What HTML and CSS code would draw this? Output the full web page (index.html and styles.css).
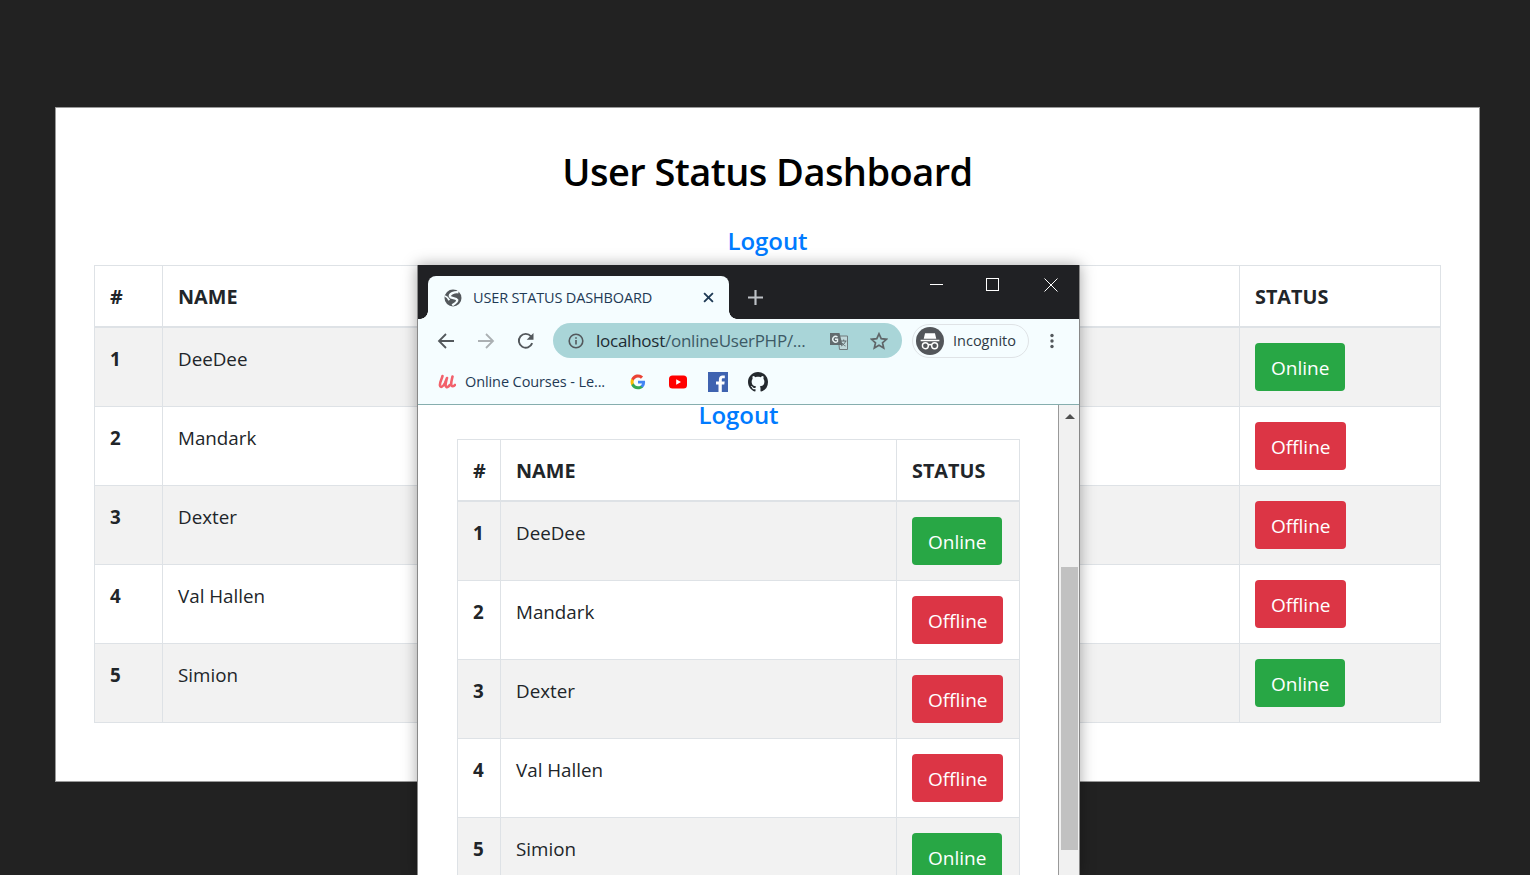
FILE: index.html
```html
<!DOCTYPE html>
<html lang="en">
<head>
<meta charset="utf-8">
<title>User Status Dashboard</title>
<link rel="stylesheet" href="styles.css">
</head>
<body>
<main class="card">
  <h1 class="title">User Status Dashboard</h1>
  <div class="logout-row"><a class="logout" href="#">Logout</a></div>
  <table class="users users-wide">
    <thead><tr><th class="c-num">#</th><th>NAME</th><th class="c-status">STATUS</th></tr></thead>
    <tbody>
      <tr><th class="c-num">1</th><td>DeeDee</td><td><span class="btn on">Online</span></td></tr>
      <tr><th class="c-num">2</th><td>Mandark</td><td><span class="btn off">Offline</span></td></tr>
      <tr><th class="c-num">3</th><td>Dexter</td><td><span class="btn off">Offline</span></td></tr>
      <tr><th class="c-num">4</th><td>Val Hallen</td><td><span class="btn off">Offline</span></td></tr>
      <tr><th class="c-num">5</th><td>Simion</td><td><span class="btn on">Online</span></td></tr>
    </tbody>
  </table>
</main>

<section class="window">
  <div class="tabstrip">
    <div class="tab">
      <svg class="tab-globe" viewBox="0 0 18 18"><circle cx="9" cy="9" r="8.500" fill="#53585c"/><path d="M14.500 3.200C10.500 2.600 5 4.800 6 7.500 7 10 12 8.200 13.200 11c.6 1.800-2.700 3.800-5 5.200" fill="none" stroke="#f5fdff" stroke-width="2.400"/><path d="M1 7c2 .6 3.200 2.200 4.300 4.200" fill="none" stroke="#f5fdff" stroke-width="1.800"/></svg>
      <span class="tab-title">USER STATUS DASHBOARD</span>
      <svg class="tab-close" viewBox="0 0 10 10"><path d="M1 1l8 8M9 1 1 9" stroke="#1f3a55" stroke-width="1.700"/></svg>
    </div>
    <svg class="new-tab" viewBox="0 0 14 14"><path d="M7 0v14M0 7h14" stroke="#bdc1c6" stroke-width="2"/></svg>
    <div class="win-controls">
      <svg class="wc wc-min" viewBox="0 0 14 14"><path d="M0 6.500h13" stroke="#fff" stroke-width="1"/></svg>
      <svg class="wc wc-max" viewBox="0 0 14 14"><rect x=".5" y=".5" width="12" height="12" fill="none" stroke="#fff"/></svg>
      <svg class="wc wc-close" viewBox="0 0 14 14"><path d="M.5.5l13 13M13.500.5l-13 13" stroke="#fff" stroke-width="1"/></svg>
    </div>
  </div>
  <div class="toolbar">
    <svg class="nav" viewBox="0 0 18 18"><path d="M17 9H2.500M9 2 2 9l7 7" fill="none" stroke="#53585c" stroke-width="1.800"/></svg>
    <svg class="nav" viewBox="0 0 18 18"><path d="M1 9h14.500M9 2l7 7-7 7" fill="none" stroke="#abb0b3" stroke-width="1.800"/></svg>
    <svg class="nav" viewBox="0 0 18 18"><path d="M15.200 11.200A6.900 6.900 0 1 1 14 4.300" fill="none" stroke="#53585c" stroke-width="1.900"/><path d="M16.500 1v6.800h-6.800z" fill="#53585c"/></svg>
    <div class="omnibox">
      <svg class="omni-info" viewBox="0 0 16 16"><circle cx="8" cy="8" r="6.800" fill="none" stroke="#53585c" stroke-width="1.600"/><path d="M8 7v4.600M8 4.200v1.600" stroke="#53585c" stroke-width="1.600"/></svg>
      <span class="url"><span class="url-host">localhost</span>/onlineUserPHP/...</span>
      <svg class="omni-tr" viewBox="0 0 18 18"><path d="M8 4h9.500v13.500H9.500z" fill="#c0d8da" stroke="#6f7a7d"/><path d="M0 1h9.500l3 12H0z" fill="#626b6e"/><path d="M7.500 5A2.900 2.900 0 1 0 7.500 9.500V7.200H5" fill="none" stroke="#e8f2f3" stroke-width="1.400"/><path d="M11 9h5.500M13.700 7.500V9M15.500 9c-.5 2.500-2.500 4-4.500 5M12 11c1 1.500 2 2.500 3.500 3" fill="none" stroke="#626b6e"/></svg>
      <svg class="omni-star" viewBox="0 0 18 18"><path d="m9 1.800 2.200 4.900 5.300.6-4 3.500 1.200 5.200L9 13.300 4.300 16l1.200-5.200-4-3.500 5.300-.6z" fill="none" stroke="#5f6669" stroke-width="1.700"/></svg>
    </div>
    <div class="incognito">
      <span class="inc-badge"><svg viewBox="0 0 20 20"><path d="M5.500 3h9l1.200 5H4.300zM1.500 8.800h17v1.400h-17z" fill="#fff"/><circle cx="5.800" cy="14.300" r="2.700" fill="none" stroke="#fff" stroke-width="1.300"/><circle cx="14.200" cy="14.300" r="2.700" fill="none" stroke="#fff" stroke-width="1.300"/><path d="M8.300 13.800c1-.7 2.400-.7 3.400 0" fill="none" stroke="#fff" stroke-width="1.200"/></svg></span>
      <span class="inc-label">Incognito</span>
    </div>
    <svg class="kebab" viewBox="0 0 4 16"><circle cx="2" cy="2.500" r="1.700" fill="#53585c"/><circle cx="2" cy="8" r="1.700" fill="#53585c"/><circle cx="2" cy="13.500" r="1.700" fill="#53585c"/></svg>
  </div>
  <div class="bookmarks">
    <svg class="bm-udemy" viewBox="0 0 18 16"><path d="M4.500 2C4 5 1.500 8 2 11.500c.5 2.500 3 1.500 5-2.500L9 4M8.800 4.500C8 8 7.200 10 7.700 12c.6 2 3 1 4-1M14.500 2.500c-.6 3-1.700 6-1.200 8.500.4 2 2.500 1.500 3.700 0" fill="none" stroke="#f2616b" stroke-width="2.600" stroke-linecap="round" stroke-linejoin="round"/></svg>
    <span class="bm-label">Online Courses - Le...</span>
    <svg class="bm-icon bm-g" viewBox="0 0 18 18"><path d="M17 9.200c0-.6-.1-1.200-.2-1.700H9v3.300h4.500a3.800 3.800 0 0 1-1.700 2.500v2.100h2.700A8 8 0 0 0 17 9.200z" fill="#4285f4"/><path d="M9 17.200c2.300 0 4.200-.8 5.500-2l-2.700-2.100c-.7.500-1.700.8-2.800.8-2.200 0-4-1.500-4.700-3.400H1.500v2.100a8.200 8.200 0 0 0 7.500 4.600z" fill="#34a853"/><path d="M4.300 10.500a5 5 0 0 1 0-3.100V5.300H1.500a8.200 8.200 0 0 0 0 7.300z" fill="#fbbc05"/><path d="M9 4c1.300 0 2.400.4 3.300 1.300l2.400-2.400A8.200 8.200 0 0 0 1.500 5.300l2.800 2.100C5 5.500 6.800 4 9 4z" fill="#ea4335"/></svg>
    <svg class="bm-icon bm-yt" viewBox="0 0 18 18"><rect x="0" y="2.500" width="18" height="13" rx="3.500" fill="#f00"/><path d="M7.200 6.300v5.400L12 9z" fill="#fff"/></svg>
    <svg class="bm-icon bm-fb" viewBox="0 0 20 20"><rect width="20" height="20" fill="#3f63b0"/><path d="M13.800 20v-7.600h2.500l.4-3h-2.900V7.600c0-.9.300-1.400 1.500-1.400h1.500V3.500c-.4 0-1.200-.1-2.200-.1-2.200 0-3.700 1.300-3.700 3.800v2.200H8v3h2.500V20z" fill="#fff"/></svg>
    <svg class="bm-icon bm-gh" viewBox="0 0 16 16"><path fill="#24292e" d="M8 0C3.580 0 0 3.580 0 8c0 3.540 2.290 6.530 5.470 7.590.4.070.55-.17.550-.38 0-.19-.01-.82-.01-1.490-2.010.37-2.530-.49-2.690-.94-.09-.23-.48-.94-.82-1.130-.28-.15-.68-.52-.01-.53.630-.01 1.080.58 1.230.82.720 1.210 1.870.87 2.330.66.070-.52.280-.87.510-1.070-1.780-.2-3.640-.89-3.640-3.950 0-.87.310-1.590.82-2.150-.08-.2-.36-1.020.08-2.120 0 0 .67-.21 2.200.82.640-.18 1.320-.27 2-.27.680 0 1.360.09 2 .27 1.530-1.040 2.200-.82 2.200-.82.440 1.100.160 1.920.080 2.120.51.560.82 1.270.82 2.150 0 3.070-1.870 3.750-3.650 3.950.29.250.54.730.54 1.480 0 1.070-.01 1.930-.01 2.200 0 .21.150.46.55.38A8.013 8.013 0 0 0 16 8c0-4.420-3.580-8-8-8z"/></svg>
  </div>
  <div class="viewport">
    <div class="page">
      <div class="logout-row"><a class="logout" href="#">Logout</a></div>
      <table class="users users-narrow">
        <thead><tr><th class="c-num">#</th><th>NAME</th><th class="c-status">STATUS</th></tr></thead>
        <tbody>
          <tr><th class="c-num">1</th><td>DeeDee</td><td><span class="btn on">Online</span></td></tr>
          <tr><th class="c-num">2</th><td>Mandark</td><td><span class="btn off">Offline</span></td></tr>
          <tr><th class="c-num">3</th><td>Dexter</td><td><span class="btn off">Offline</span></td></tr>
          <tr><th class="c-num">4</th><td>Val Hallen</td><td><span class="btn off">Offline</span></td></tr>
          <tr><th class="c-num">5</th><td>Simion</td><td><span class="btn on">Online</span></td></tr>
        </tbody>
      </table>
    </div>
    <div class="scrollbar">
      <div class="sb-up"></div>
      <div class="sb-thumb"></div>
    </div>
  </div>
</section>
</body>
</html>
```
FILE: styles.css
```css
* { box-sizing: border-box; }
html, body { height: 100%; overflow: hidden; }
body {
  margin: 0;
  padding: 107px 50px 0 55px;
  background: #222;
  font-family: "Open Sans", "Noto Sans", "Liberation Sans", sans-serif;
  color: #212529;
}
.card {
  height: 675px;
  background: #fff;
  border: 1px solid #999;
  padding: 38px 38px 0;
}
.title {
  margin: 0 0 31px;
  text-align: center;
  font-size: 38px;
  line-height: 50px;
  font-weight: 600;
  color: #000;
  letter-spacing: -0.55px;
}
.logout-row {
  text-align: center;
  height: 28px;
  line-height: 28px;
  margin-bottom: 10px;
}
.logout {
  color: #007bff;
  text-decoration: none;
  font-size: 24px;
  font-weight: 600;
  letter-spacing: -0.05px;
}
.users {
  border-collapse: collapse;
  table-layout: fixed;
  width: 100%;
  font-size: 18.8px;
}
.users-wide { width: 1347px; }
.users-narrow { width: 563px; }
.users th, .users td {
  border: 1px solid #dee2e6;
  padding: 15px;
  text-align: left;
  vertical-align: top;
  line-height: 32px;
}
.users thead th {
  border-bottom-width: 2px;
  font-size: 19.8px;
  font-weight: 700;
  height: 61px;
  padding: 16px 15px 13px;
  line-height: 30px;
}
.users tbody tr { height: 79px; }
.users tbody tr:nth-child(odd) { background: #f2f2f2; }
.users tbody .c-num { font-weight: 700; }
.users-wide .c-num { width: 68px; }
.users-wide .c-status { width: 201px; }
.users-narrow .c-num { width: 43px; }
.users-narrow .c-status { width: 123px; }
.btn {
  display: inline-block;
  height: 48px;
  line-height: 50px;
  padding: 0 16px;
  border-radius: 4px;
  color: #fff;
  font-size: 19px;
  vertical-align: top;
}
.on { background: #28a745; }
.off { background: #dc3545; }

.window {
  position: absolute;
  left: 417px;
  top: 265px;
  width: 663px;
  height: 610px;
  display: flex;
  flex-direction: column;
  background: #fff;
  border-left: 1px solid #888;
  border-right: 1px solid #888;
  box-shadow: 0 0 14px rgba(0,0,0,.35);
  overflow: hidden;
}
.tabstrip {
  flex: none;
  height: 54px;
  background: #202124;
  display: flex;
  align-items: flex-end;
  padding-left: 10px;
  position: relative;
}
.tab {
  width: 301px;
  height: 43px;
  background: #f5fdff;
  border-radius: 8px 8px 0 0;
  display: flex;
  align-items: center;
  padding: 0 15px 0 16px;
  position: relative;
}
.tab::before, .tab::after {
  content: "";
  position: absolute;
  bottom: 0;
  width: 8px;
  height: 8px;
  background: radial-gradient(circle at 100% 0, #202124 7.5px, #f5fdff 8px);
}
.tab::before { left: -8px; transform: scaleX(-1); }
.tab::after { right: -8px; }
.tab-globe { width: 18px; height: 18px; flex: none; margin-right: 11px; }
.tab-title { flex: 1; font-size: 14.5px; color: #1f3a55; white-space: nowrap; letter-spacing: -0.15px; }
.tab-close { width: 11px; height: 11px; flex: none; }
.new-tab { width: 15px; height: 15px; margin: 0 0 14px 19px; flex: none; }
.win-controls {
  position: absolute;
  right: 0;
  top: 0;
  width: 149px;
  height: 40px;
}
.wc { width: 14px; height: 14px; position: absolute; top: 13px; }
.wc-min { left: 0; }
.wc-max { left: 56px; }
.wc-close { left: 114px; }
.toolbar {
  flex: none;
  height: 44px;
  background: #f5fdff;
  display: flex;
  align-items: center;
  padding: 0 0 1px 19px;
}
.nav { width: 18px; height: 18px; flex: none; margin-right: 22px; }
.nav:nth-of-type(3) { margin-right: 18px; }
.omnibox {
  width: 349px;
  height: 35px;
  border-radius: 18px;
  background: #a9d5d8;
  display: flex;
  align-items: center;
  padding: 0 14px 0 15px;
  flex: none;
}
.omni-info { width: 16px; height: 16px; flex: none; margin-right: 12px; }
.url { flex: 1; min-width: 0; font-size: 17px; color: #3d5a66; white-space: nowrap; letter-spacing: -0.25px; }
.url-host { color: #1d2b33; }
.omni-tr { width: 18px; height: 18px; flex: none; margin-right: 22px; }
.omni-star { width: 18px; height: 18px; flex: none; }
.incognito {
  margin-left: 10px;
  width: 117px;
  height: 34px;
  border: 1px solid #dfe3e6;
  border-radius: 17px;
  display: flex;
  align-items: center;
  padding-left: 3px;
  flex: none;
}
.inc-badge {
  width: 28px;
  height: 28px;
  border-radius: 50%;
  background: #53565a;
  display: flex;
  align-items: center;
  justify-content: center;
  flex: none;
}
.inc-badge svg { width: 22px; height: 22px; }
.inc-label { margin-left: 9px; font-size: 14.5px; color: #2f3a45; }
.kebab { width: 4px; height: 16px; margin-left: 21px; flex: none; }
.bookmarks {
  flex: none;
  height: 42px;
  background: #f5fdff;
  border-bottom: 1px solid #86aeae;
  display: flex;
  align-items: center;
  padding: 0 0 3px 20px;
}
.bm-udemy { width: 18px; height: 16px; flex: none; margin-right: 9px; }
.bm-label { font-size: 14.5px; color: #1f3a55; width: 163px; white-space: nowrap; letter-spacing: -0.1px; flex: none; margin-bottom: 2px; }
.bm-icon { width: 20px; height: 20px; flex: none; margin-right: 20px; }
.bm-g { width: 16px; height: 16px; margin: 0 23px 0 2px; }
.bm-yt { width: 18px; height: 18px; margin-right: 21px; }
.viewport {
  flex: 1;
  min-height: 0;
  display: flex;
  overflow: hidden;
}
.page {
  flex: 1;
  min-width: 0;
  padding: 0 38px 0 39px;
  margin-top: -4px;
}
.scrollbar {
  flex: none;
  width: 21px;
  background: #f1f1f1;
  border-left: 1px solid #999;
  padding: 162px 1px 0 2px;
  position: relative;
}
.sb-up {
  position: absolute;
  top: 9px;
  left: 6px;
  width: 0;
  height: 0;
  border: 5px solid transparent;
  border-top: 0;
  border-bottom-color: #505050;
}
.sb-thumb { height: 283px; background: #c1c1c1; }
```
